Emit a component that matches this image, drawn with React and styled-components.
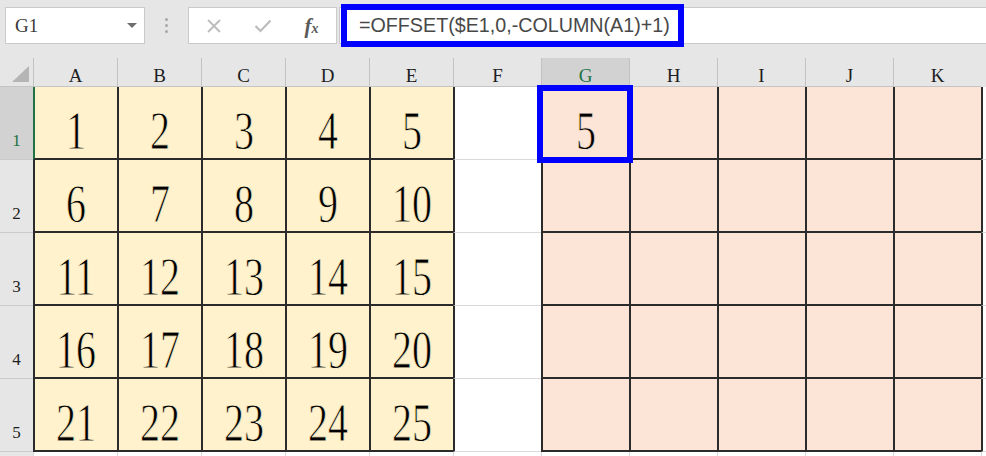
import styled, { createGlobalStyle } from "styled-components"

const GlobalStyle = createGlobalStyle`
    html, body {
        margin: 0;
        padding: 0;
        background: #e6e6e6;
        overflow: hidden;
    }
    body {
        font-family: "Liberation Serif", "Times New Roman", serif;
    }
`

const Page = styled.div`
    display: flex;
    flex-direction: column;
    height: 100vh;
`

const Toolbar = styled.div`
    display: flex;
    align-items: center;
    padding: 7px 0 0 5px;
    margin-bottom: 14px;
    height: 37px;
`

const NameBox = styled.div`
    box-sizing: border-box;
    width: 140px;
    height: 37px;
    background: #fff;
    border: 1px solid #cacaca;
    display: flex;
    align-items: center;
    justify-content: space-between;
    padding: 0 7px 0 9px;
    font-size: 19px;
    color: #3a3a3a;
`

const Grip = styled.div`
    width: 43px;
    display: flex;
    flex-direction: column;
    align-items: center;
    gap: 3px;

    span{
        width: 3px;
        height: 3px;
        border-radius: 50%;
        background: #a8a8a8;
    }
`

const FuncBox = styled.div`
    box-sizing: border-box;
    width: 149px;
    height: 37px;
    background: #fff;
    border: 1px solid #cacaca;
    display: grid;
    grid-template-columns: repeat(3, 1fr);
    align-items: center;
    justify-items: center;
`

const Fx = styled.span`
    font-family: "Liberation Serif", serif;
    font-style: italic;
    font-weight: bold;
    color: #5a5a5a;
    font-size: 21px;
    line-height: 1;
    margin-top: 1px;

    small{
        font-size: 14px;
    }
`

const FormulaInput = styled.div`
    box-sizing: border-box;
    flex: 1;
    height: 37px;
    margin-left: 2px;
    background: #fff;
    border: 1px solid #cacaca;
    border-right: none;
    display: flex;
    align-items: center;
`

const FormulaHighlight = styled.div`
    box-sizing: border-box;
    width: 343px;
    height: 43px;
    flex-shrink: 0;
    margin-left: 1px;
    border: 6px solid #0000ff;
    display: flex;
    align-items: center;
    padding-left: 12px;
    font-family: "Liberation Sans", Arial, sans-serif;
    font-size: 19.7px;
    color: #484848;
    white-space: nowrap;
    position: relative;
    z-index: 2;
`

const Sheet = styled.div`
    flex: 1;
    display: grid;
    grid-template-columns: 33px repeat(5, 84px) repeat(6, 88px) 1fr;
    grid-template-rows: 29px repeat(5, 73px) 1fr;
    background: #fff;
`

const Corner = styled.div`
    background: #e6e6e6;
    border-bottom: 1px solid #c4c4c4;
    display: flex;
    align-items: flex-end;
    justify-content: flex-end;
    padding: 0 4px 4px 0;
`

const ColHead = styled.div`
    box-sizing: border-box;
    background: ${p => p.$active ? "#d2d2d2" : "#e6e6e6"};
    color: ${p => p.$active ? "#217346" : "#1e1e1e"};
    border-left: 1px solid #c2c2c2;
    border-bottom: 1px solid #c4c4c4;
    display: flex;
    align-items: flex-end;
    justify-content: center;
    padding-bottom: 1px;
    font-size: 19px;
    line-height: 1;
`

const RowHead = styled.div`
    box-sizing: border-box;
    background: ${p => p.$active ? "#d2d2d2" : "#e6e6e6"};
    color: ${p => p.$active ? "#217346" : "#1e1e1e"};
    border-bottom: 1px solid #cbcbcb;
    display: flex;
    align-items: flex-end;
    justify-content: center;
    padding-bottom: 10px;
    font-size: 17px;
    line-height: 1;
`

const Cell = styled.div`
    box-sizing: border-box;
    position: relative;
    background: ${p => p.$fill || "#fff"};
    border-left: 2px solid ${p => p.$edge || "#2b2b2b"};
    border-bottom: ${p => p.$light ? "1px solid #d9d9d9" : "2px solid #2b2b2b"};
    display: flex;
    align-items: flex-end;
    justify-content: center;
    padding-bottom: 2px;
`

const Tail = styled.div`
    background: ${p => p.$head ? "#e6e6e6" : "#fff"};
    border-left: 1px solid ${p => p.$head ? "#e6e6e6" : "#d9d9d9"};
`

const Num = styled.span`
    display: inline-block;
    font-size: 40px;
    line-height: 1;
    color: #000;
    -webkit-text-stroke: 0.6px ${p => p.$bg};
    transform: scaleY(1.37);
    transform-origin: 50% 84%;
`

const Selection = styled.div`
    position: absolute;
    top: -2px;
    left: -6px;
    right: -4px;
    bottom: -5px;
    border: 6px solid #0000ff;
    pointer-events: none;
    z-index: 2;
`

const cols = ["A", "B", "C", "D", "E", "F", "G", "H", "I", "J", "K"]
const YELLOW = "#fff2cc"
const PINK = "#fce4d6"

const CloseIcon = () => (
    <svg width="16" height="16" viewBox="0 0 16 16">
        <path d="M2 2 L14 14 M14 2 L2 14" stroke="#bcbcbc" strokeWidth="1.8" fill="none" />
    </svg>
)

const CheckIcon = () => (
    <svg width="18" height="14" viewBox="0 0 18 14">
        <path d="M1.5 7 L6.5 12 L16.5 1.5" stroke="#bcbcbc" strokeWidth="2.2" fill="none" />
    </svg>
)

const App = () => {
    const rows = [1, 2, 3, 4, 5]

    return (
        <Page>
            <GlobalStyle />

            <Toolbar>
                <NameBox>
                    <span>G1</span>
                    <svg width="10" height="6" viewBox="0 0 10 6">
                        <path d="M0 0 H10 L5 5 Z" fill="#6e6e6e" />
                    </svg>
                </NameBox>
                <Grip><span /><span /><span /></Grip>
                <FuncBox>
                    <CloseIcon />
                    <CheckIcon />
                    <Fx>f<small>x</small></Fx>
                </FuncBox>
                <FormulaInput>
                    <FormulaHighlight>=OFFSET($E1,0,-COLUMN(A1)+1)</FormulaHighlight>
                </FormulaInput>
            </Toolbar>

            <Sheet>
                <Corner>
                    <svg width="17" height="16" viewBox="0 0 17 16">
                        <path d="M17 0 V16 H0 Z" fill="#b5b5b5" />
                    </svg>
                </Corner>
                {cols.map(c => (
                    <ColHead key={c} $active={c === "G"}>{c}</ColHead>
                ))}
                <Tail $head />

                {rows.map(r => (
                    <>
                        <RowHead key={"h" + r} $active={r === 1}>{r}</RowHead>
                        {[0, 1, 2, 3, 4].map(i => (
                            <Cell key={r + "-" + i} $fill={YELLOW} $edge={r === 1 && i === 0 ? "#217346" : null}>
                                <Num $bg={YELLOW}>{(r - 1) * 5 + i + 1}</Num>
                            </Cell>
                        ))}
                        <Cell key={r + "-f"} $light />
                        {[0, 1, 2, 3, 4].map(i => (
                            <Cell key={r + "-p" + i} $fill={PINK}>
                                {r === 1 && i === 0 && (
                                    <>
                                        <Num $bg={PINK}>5</Num>
                                        <Selection />
                                    </>
                                )}
                            </Cell>
                        ))}
                        <Cell key={r + "-l"} $light />
                    </>
                ))}

                <Tail $head />
                {cols.map(c => <Tail key={"t" + c} />)}
                <Tail />
            </Sheet>
        </Page>
    )
}

export default App
